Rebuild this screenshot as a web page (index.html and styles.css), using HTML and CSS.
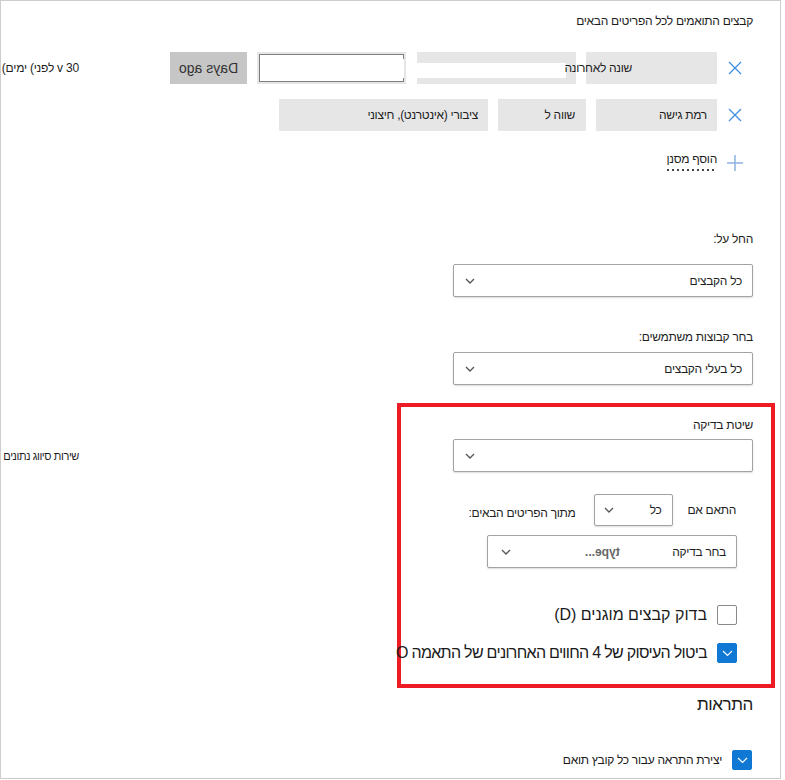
FILE: index.html
```html
<!DOCTYPE html>
<html lang="he">
<head>
<meta charset="utf-8">
<title>קבצים התואמים</title>
<link rel="stylesheet" href="styles.css">
</head>
<body>
<div class="frame">
  <div class="title">קבצים התואמים לכל הפריטים הבאים</div>

  <div class="filter-row">
    <span class="x-cell"><svg width="14" height="14" viewBox="0 0 14 14"><path d="M1 1L13 13M13 1L1 13" stroke="#3c8fe0" stroke-width="1.3" fill="none"/></svg></span>
    <div class="chip chip-1"><span class="chip-over">שונה לאחרונה</span></div>
    <div class="chip chip-2"><span class="chip-blank"></span></div>
    <div class="input-wrap"><div class="input-inner"></div></div>
    <div class="days-btn"><span class="mirror">Days ago</span></div>
    <div class="days-note"><span class="iso">(ימים</span> <span class="iso">(לפני</span> <span class="iso">v 30</span></div>
  </div>

  <div class="filter-row row-2">
    <span class="x-cell"><svg width="14" height="14" viewBox="0 0 14 14"><path d="M1 1L13 13M13 1L1 13" stroke="#3c8fe0" stroke-width="1.3" fill="none"/></svg></span>
    <div class="chip chip-a">רמת גישה</div>
    <div class="chip chip-b">שווה ל</div>
    <div class="chip chip-c">ציבורי (אינטרנט), חיצוני</div>
  </div>

  <div class="add-row">
    <span class="x-cell"><svg width="16" height="16" viewBox="0 0 16 16"><path d="M8 0V16M0 8H16" stroke="#8db3e2" stroke-width="1.5" fill="none"/></svg></span>
    <span class="add-text">הוסף מסנן</span>
  </div>

  <div class="label label-apply">החל על:</div>
  <div class="dropdown dd-wide">
    <span>כל הקבצים</span>
    <svg class="chev" width="10" height="6" viewBox="0 0 10 6"><path d="M1 1L5 5L9 1" stroke="#555" stroke-width="1.3" fill="none"/></svg>
  </div>

  <div class="label label-groups">בחר קבוצות משתמשים:</div>
  <div class="dropdown dd-wide dd-groups">
    <span>כל בעלי הקבצים</span>
    <svg class="chev" width="10" height="6" viewBox="0 0 10 6"><path d="M1 1L5 5L9 1" stroke="#555" stroke-width="1.3" fill="none"/></svg>
  </div>

  <section class="highlight">
    <div class="label label-method">שיטת בדיקה</div>
    <div class="method-row">
      <div class="dropdown dd-wide dd-method">
        <span></span>
        <svg class="chev" width="10" height="6" viewBox="0 0 10 6"><path d="M1 1L5 5L9 1" stroke="#555" stroke-width="1.3" fill="none"/></svg>
      </div>
      <span class="side-note">שירות סיווג נתונים</span>
    </div>

    <div class="match-row">
      <span class="match-text">התאם אם</span>
      <div class="dropdown dd-small">
        <span>כל</span>
        <svg class="chev" width="10" height="6" viewBox="0 0 10 6"><path d="M1 1L5 5L9 1" stroke="#555" stroke-width="1.3" fill="none"/></svg>
      </div>
      <span class="match-after">מתוך הפריטים הבאים:</span>
    </div>

    <div class="dropdown dd-check">
      <span class="check-main">בחר בדיקה</span>
      <span class="check-type"><span class="mirror">type...</span></span>
      <svg class="chev" width="10" height="6" viewBox="0 0 10 6"><path d="M1 1L5 5L9 1" stroke="#555" stroke-width="1.3" fill="none"/></svg>
    </div>

    <div class="cb-row cb-row-1">
      <span class="cb"></span>
      <span class="cb-label">בדוק קבצים מוגנים (D)</span>
    </div>
    <div class="cb-row cb-row-2">
      <span class="cb cb-on"><svg width="11" height="7" viewBox="0 0 11 7"><path d="M1 1L5.5 5.5L10 1" stroke="#fff" stroke-width="1.2" fill="none"/></svg></span>
      <span class="cb-label tight">ביטול העיסוק של 4 החווים האחרונים של התאמה O</span>
    </div>
  </section>

  <h2 class="alerts">התראות</h2>
  <div class="cb-row cb-row-3">
    <span class="cb cb-on"><svg width="11" height="7" viewBox="0 0 11 7"><path d="M1 1L5.5 5.5L10 1" stroke="#fff" stroke-width="1.2" fill="none"/></svg></span>
    <span class="cb-label small">יצירת התראה עבור כל קובץ תואם</span>
  </div>
</div>
</body>
</html>
```

FILE: styles.css
```css
html, body {
  margin: 0;
  padding: 0;
  background: #fff;
}

body {
  font-family: "Liberation Sans", "DejaVu Sans", sans-serif;
  font-size: 12px;
  letter-spacing: -0.3px;
  color: #1e1e1e;
}

.frame {
  width: 781px;
  height: 779px;
  box-sizing: border-box;
  border: 1px solid #cdcdcd;
  overflow: hidden;
  direction: rtl;
  padding: 11px 27px 0 0;
}

.title {
  line-height: 18px;
  height: 18px;
}

/* filter rows */
.filter-row {
  display: flex;
  align-items: stretch;
  height: 32px;
  margin-top: 22px;
}

.row-2 {
  margin-top: 15px;
}

.x-cell {
  flex: 0 0 36px;
  display: flex;
  align-items: center;
  justify-content: center;
}

.chip {
  background: #e6e6e6;
  flex-shrink: 0;
  display: flex;
  align-items: center;
  white-space: nowrap;
  box-sizing: border-box;
}

.chip-1 {
  width: 131px;
  padding-right: 85px;
}

.chip-over {
  position: relative;
  z-index: 1;
}

.chip-2 {
  width: 159px;
  margin-right: 10px;
  align-items: flex-start;
}

.chip-blank {
  display: block;
  width: 149px;
  height: 15px;
  margin-top: 11px;
  margin-right: 10px;
  background: #fff;
}

.input-wrap {
  width: 149px;
  margin-right: 11px;
  background: #e6e6e6;
  padding: 2px;
  box-sizing: border-box;
  flex-shrink: 0;
}

.input-inner {
  height: 100%;
  box-sizing: border-box;
  border: 1px solid #7d7d7d;
  border-right: none;
  background:
    linear-gradient(#7d7d7d, #7d7d7d) right top / 1px 4px no-repeat,
    linear-gradient(#7d7d7d, #7d7d7d) right bottom / 1px 3px no-repeat,
    #fff;
}

.days-btn {
  width: 77px;
  margin-right: 10px;
  background: #c6c6c6;
  display: flex;
  align-items: center;
  justify-content: center;
  font-size: 14px;
  letter-spacing: 0;
  color: #333;
  flex-shrink: 0;
}

.mirror {
  display: inline-block;
  transform: scaleX(-1);
  direction: ltr;
}

.days-note {
  direction: ltr;
  margin-right: 91px;
  flex-shrink: 0;
  white-space: nowrap;
  display: flex;
  align-items: center;
  gap: 3px;
  font-size: 12px;
  letter-spacing: -0.2px;
  color: #1e1e1e;
}

.iso {
  unicode-bidi: isolate;
}

.chip-a {
  width: 121px;
  padding-right: 10px;
}

.chip-b {
  width: 88px;
  margin-right: 10px;
  padding-right: 11px;
}

.chip-c {
  width: 209px;
  margin-right: 10px;
  padding-right: 10px;
}

/* add filter */
.add-row {
  display: flex;
  align-items: center;
  height: 20px;
  margin-top: 22px;
}

.add-text {
  margin-bottom: 6px;
  position: relative;
  padding-bottom: 2px;
}

.add-text::after {
  content: "";
  position: absolute;
  left: 0;
  right: 1px;
  bottom: -3px;
  height: 2px;
  background: repeating-linear-gradient(90deg, #444 0 2px, transparent 2px 5px);
}

/* labels and dropdowns */
.label {
  line-height: 18px;
  height: 18px;
}

.label-apply {
  margin-top: 57px;
}

.label-groups {
  margin-top: 31px;
}

.dropdown {
  display: flex;
  align-items: center;
  justify-content: space-between;
  height: 33px;
  box-sizing: border-box;
  border: 1px solid #a3a3a3;
  border-radius: 2px;
  box-shadow: 0 1px 2px rgba(0, 0, 0, 0.14);
  background: #fff;
  padding: 0 10px 0 11px;
  white-space: nowrap;
}

.chev {
  flex-shrink: 0;
}

.dd-wide {
  width: 300px;
  margin-top: 16px;
}

.dd-groups {
  margin-top: 6px;
}

/* highlighted section */
.highlight {
  margin-top: 18px;
  margin-right: -22px;
  width: 378px;
  box-sizing: border-box;
  border: 4px solid #ed1c24;
  padding: 9px 18px 19px 0;
}

.label-method {
  margin: 0;
}

.method-row {
  display: flex;
  align-items: center;
  margin-top: 5px;
}

.dd-method {
  margin-top: 0;
  flex-shrink: 0;
}

.side-note {
  flex-shrink: 0;
  margin-right: 374px;
  white-space: nowrap;
  font-size: 11px;
  letter-spacing: -0.4px;
}

.match-row {
  display: flex;
  align-items: center;
  height: 32px;
  margin-top: 22px;
  padding-right: 17px;
}

.match-text {
  flex-shrink: 0;
}

.dd-small {
  width: 79px;
  height: 32px;
  margin-right: 15px;
  padding: 0 10px 0 9px;
  flex-shrink: 0;
}

.match-after {
  margin-right: 18px;
  padding-top: 6px;
  white-space: nowrap;
}

.dd-check {
  width: 250px;
  margin-top: 9px;
  margin-right: 16px;
  justify-content: flex-start;
  padding: 0 10px 0 13px;
}

.check-type {
  margin-right: 53px;
  font-weight: bold;
  color: #666;
  font-size: 12px;
  letter-spacing: 0;
}

.dd-check .chev {
  margin-right: auto;
}

/* checkboxes */
.cb-row {
  display: flex;
  align-items: center;
  height: 24px;
  margin-right: 16px;
}

.cb-row-1 {
  margin-top: 35px;
}

.cb-row-2 {
  margin-top: 14px;
}

.cb {
  flex: 0 0 20px;
  height: 20px;
  box-sizing: border-box;
  border: 1px solid #8a8a8a;
  border-radius: 2px;
  background: #fff;
  display: flex;
  align-items: center;
  justify-content: center;
}

.cb-on {
  background: #0f78d4;
  border-color: #0f78d4;
}

.cb-label {
  margin-right: 10px;
  font-size: 16px;
  letter-spacing: 0;
  white-space: nowrap;
  color: #1a1a1a;
}

.cb-label.tight {
  letter-spacing: -0.7px;
}

.cb-label.small {
  font-size: 12px;
  letter-spacing: -0.3px;
}

.alerts {
  margin: 5px 0 0 0;
  font-size: 17px;
  letter-spacing: -0.4px;
  font-weight: normal;
  line-height: 24px;
  height: 24px;
  color: #1a1a1a;
}

.cb-row-3 {
  margin-top: 31px;
  margin-right: 1px;
}
```
